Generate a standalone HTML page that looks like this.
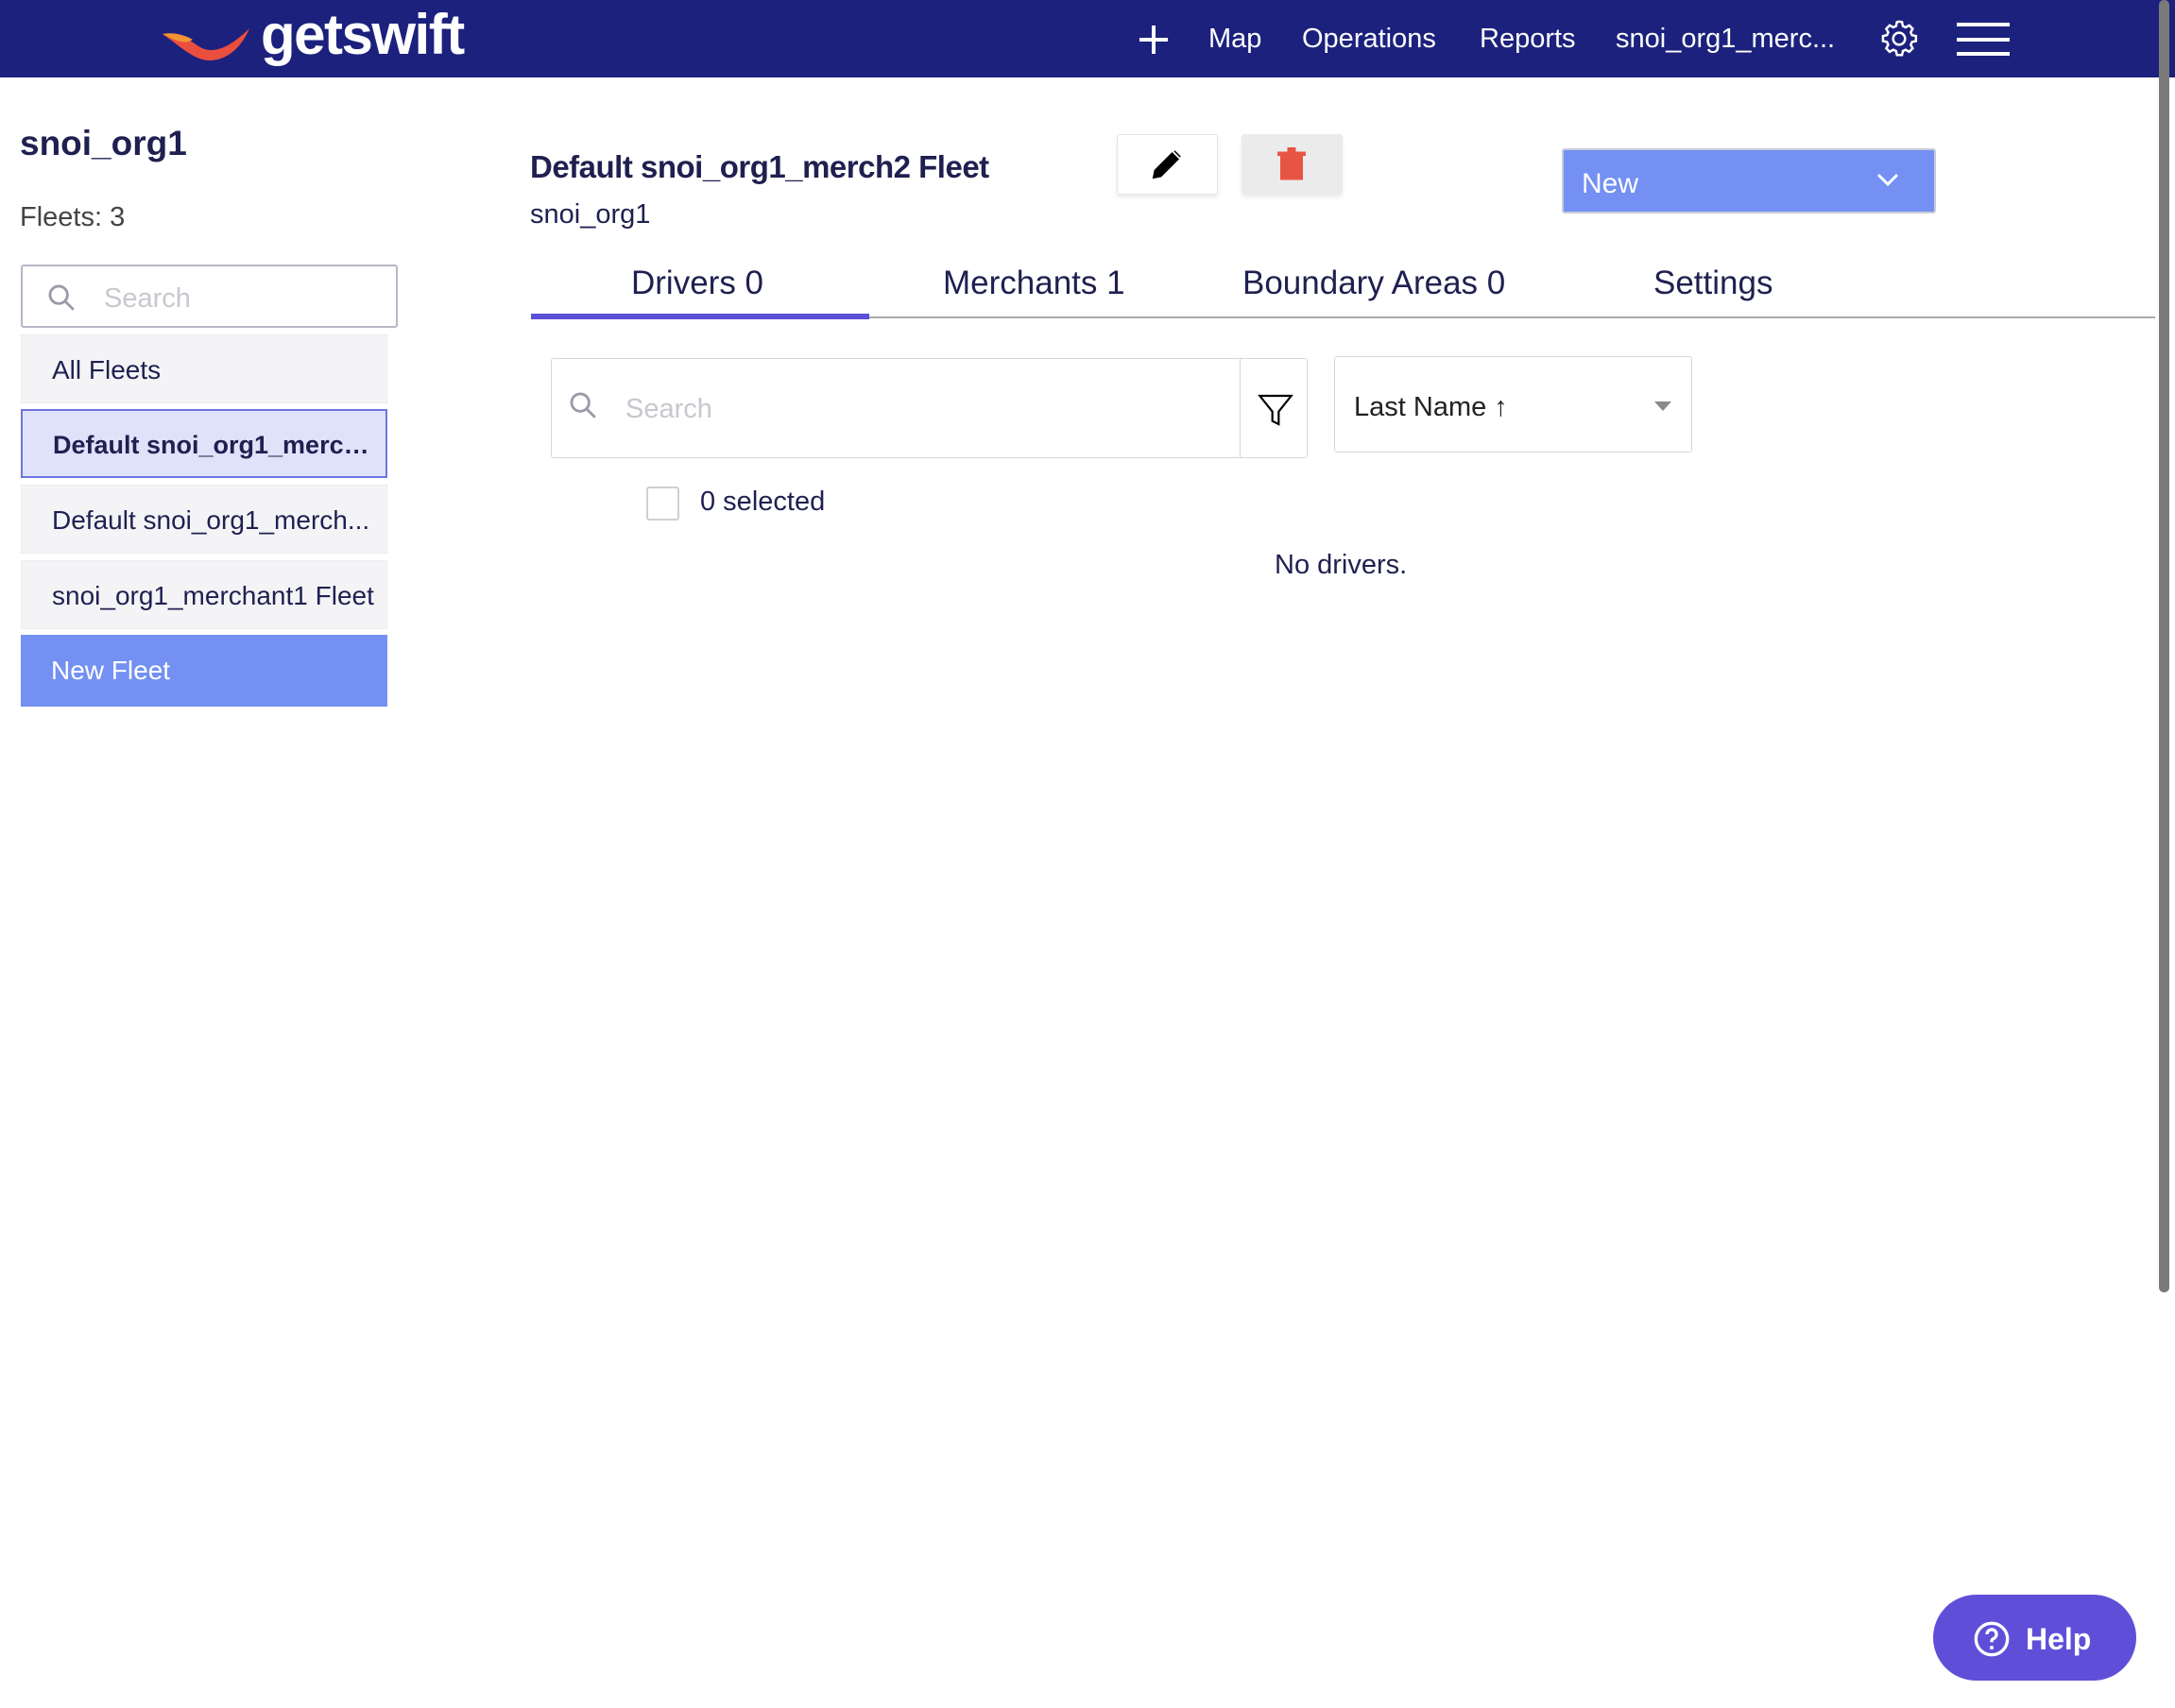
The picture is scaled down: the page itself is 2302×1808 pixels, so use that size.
<!DOCTYPE html>
<html><head><meta charset="utf-8"><style>
*{box-sizing:border-box;margin:0;padding:0}
body{width:2302px;height:1808px;position:relative;background:#fff;font-family:"Liberation Sans",sans-serif;color:#1f2050;overflow:hidden}
.a{position:absolute;white-space:nowrap}
.hdr{left:0;top:0;width:2302px;height:82px;background:#1c217d}
.nav{color:#fff;font-size:29px;top:25px}
.item{left:22px;width:388px;height:73px;background:#f4f4f7;border:1px solid #ececf0;font-size:28px;line-height:73px;padding-left:32px;overflow:hidden;text-overflow:ellipsis;padding-right:6px}
.tab{top:280px;font-size:35px;color:#1f2050}
</style></head><body>
<div class="a hdr"></div>
<svg class="a" style="left:170px;top:20px" width="100" height="45" viewBox="0 0 100 45"><path d="M2 16 C18 14 30 22 42 30 C56 38 74 30 94 10 C86 30 70 44 52 44 C36 44 22 30 2 16Z" fill="#ea4f3d"/><path d="M2 16 C12 14 24 16 34 22 C28 26 20 26 2 16Z" fill="#f39433"/></svg>
<div class="a" style="left:276px;top:2px;font-size:60px;font-weight:bold;color:#fff;letter-spacing:-1.5px">getswift</div>
<svg class="a" style="left:1204px;top:25px" width="34" height="34" viewBox="0 0 34 34"><path d="M17 2V32M2 17H32" stroke="#fff" stroke-width="4"/></svg>
<div class="a nav" style="left:1279px">Map</div>
<div class="a nav" style="left:1378px">Operations</div>
<div class="a nav" style="left:1566px">Reports</div>
<div class="a nav" style="left:1710px">snoi_org1_merc...</div>
<svg class="a" style="left:1987px;top:18px" width="46" height="46" viewBox="0 0 24 24"><path fill="none" stroke="#fff" stroke-width="1.3" d="M12 2.5l1.6.3.5 2.2 1.5.7 2-1.1 1.9 1.9-1.1 2 .7 1.5 2.2.5v2.8l-2.2.5-.7 1.5 1.1 2-1.9 1.9-2-1.1-1.5.7-.5 2.2h-2.8l-.5-2.2-1.5-.7-2 1.1-1.9-1.9 1.1-2-.7-1.5-2.2-.5v-2.8l2.2-.5.7-1.5-1.1-2 1.9-1.9 2 1.1 1.5-.7.5-2.2z"/><circle cx="12" cy="12" r="3.3" fill="none" stroke="#fff" stroke-width="1.3"/></svg>
<div class="a" style="left:2071px;top:24px;width:56px;height:4px;background:#fff"></div>
<div class="a" style="left:2071px;top:40px;width:56px;height:4px;background:#fff"></div>
<div class="a" style="left:2071px;top:55px;width:56px;height:4px;background:#fff"></div>
<div class="a" style="left:2285px;top:0;width:11px;height:1368px;background:#7a7a7a;border-radius:5px"></div>

<div class="a" style="left:21px;top:131px;font-size:37px;font-weight:bold">snoi_org1</div>
<div class="a" style="left:21px;top:214px;font-size:29px;color:#444">Fleets: 3</div>
<div class="a" style="left:22px;top:280px;width:399px;height:67px;border:2px solid #b8b6c8;border-radius:3px"></div>
<svg class="a" style="left:48px;top:298px" width="34" height="34" viewBox="0 0 24 24"><circle cx="10" cy="10" r="6.5" fill="none" stroke="#9a9aa8" stroke-width="2"/><path d="M15 15l6 6" stroke="#9a9aa8" stroke-width="2"/></svg>
<div class="a" style="left:110px;top:300px;font-size:29px;color:#c8c8cf">Search</div>
<div class="a item" style="top:354px">All Fleets</div>
<div class="a item" style="top:433px;background:#dfe2f8;border:2px solid #6e74e0;font-weight:bold;font-size:27px">Default snoi_org1_merch...</div>
<div class="a item" style="top:513px">Default snoi_org1_merch...</div>
<div class="a item" style="top:593px">snoi_org1_merchant1 Fleet</div>
<div class="a item" style="top:672px;height:76px;background:#7390f2;border:none;color:#fff;line-height:76px">New Fleet</div>

<div class="a" style="left:561px;top:158px;font-size:33px;font-weight:bold;letter-spacing:-0.5px">Default snoi_org1_merch2 Fleet</div>
<div class="a" style="left:561px;top:211px;font-size:29px">snoi_org1</div>
<div class="a" style="left:1182px;top:142px;width:107px;height:64px;border:1px solid #e4e4e4;border-radius:3px;box-shadow:0 3px 4px rgba(0,0,0,.08)"></div>
<svg class="a" style="left:1216px;top:154px" width="38" height="40" viewBox="0 0 24 24"><path d="M3 21l1-5L15.5 4.5l4 4L8 20z M17 3l4 4" fill="#000" stroke="#000" stroke-width="1"/></svg>
<div class="a" style="left:1314px;top:142px;width:107px;height:64px;background:#ebebeb;border-radius:3px;box-shadow:0 3px 4px rgba(0,0,0,.08)"></div>
<svg class="a" style="left:1352px;top:156px" width="30" height="36" viewBox="0 0 20 24"><rect x="2" y="6" width="16" height="17" fill="#e85444"/><rect x="0" y="3" width="20" height="3" fill="#e85444"/><rect x="7" y="0" width="6" height="4" fill="#e85444"/></svg>
<div class="a" style="left:1653px;top:157px;width:396px;height:69px;background:#7390f2;border:2px solid #c8ccd8;border-radius:3px"></div>
<div class="a" style="left:1674px;top:178px;font-size:30px;color:#fff">New</div>
<svg class="a" style="left:1985px;top:180px" width="26" height="20" viewBox="0 0 26 20"><path d="M3 5l10 10L23 5" fill="none" stroke="#fff" stroke-width="3"/></svg>

<div class="a tab" style="left:668px">Drivers 0</div>
<div class="a tab" style="left:998px">Merchants 1</div>
<div class="a tab" style="left:1315px">Boundary Areas 0</div>
<div class="a tab" style="left:1750px">Settings</div>
<div class="a" style="left:562px;top:335px;width:1719px;height:2px;background:#aaa"></div>
<div class="a" style="left:562px;top:332px;width:358px;height:6px;background:#5b4fd6"></div>

<div class="a" style="left:583px;top:379px;width:801px;height:106px;border:1px solid #d6d6d6;border-radius:3px"></div>
<div class="a" style="left:1312px;top:380px;width:1px;height:104px;background:#d6d6d6"></div>
<svg class="a" style="left:600px;top:412px" width="34" height="34" viewBox="0 0 24 24"><circle cx="10" cy="10" r="6.5" fill="none" stroke="#9a9aa8" stroke-width="2"/><path d="M15 15l6 6" stroke="#9a9aa8" stroke-width="2"/></svg>
<div class="a" style="left:662px;top:417px;font-size:29px;color:#c8c8cf">Search</div>
<svg class="a" style="left:1330px;top:414px" width="40" height="40" viewBox="0 0 24 24"><path d="M2 3h20l-8 10v8l-4-2v-6z" fill="none" stroke="#000" stroke-width="1.3"/></svg>
<div class="a" style="left:1412px;top:377px;width:379px;height:102px;border:1px solid #d6d6d6;border-radius:3px"></div>
<div class="a" style="left:1433px;top:415px;font-size:29px;color:#222">Last Name ↑</div>
<div class="a" style="left:1751px;top:425px;width:0;height:0;border-left:9px solid transparent;border-right:9px solid transparent;border-top:10px solid #8a8a8a"></div>
<div class="a" style="left:684px;top:515px;width:35px;height:36px;border:2px solid #d0d0d0;border-radius:3px"></div>
<div class="a" style="left:741px;top:515px;font-size:29px">0 selected</div>
<div class="a" style="left:1349px;top:582px;font-size:29px">No drivers.</div>

<div class="a" style="left:2046px;top:1688px;width:215px;height:91px;background:#5f4fd8;border-radius:46px"></div>
<svg class="a" style="left:2088px;top:1715px" width="40" height="40" viewBox="0 0 24 24"><circle cx="12" cy="12" r="10" fill="none" stroke="#fff" stroke-width="2"/><path d="M9 9a3 3 0 1 1 4 2.8c-1 .4-1 1.2-1 2.2" fill="none" stroke="#fff" stroke-width="2"/><circle cx="12" cy="17.5" r="1.2" fill="#fff"/></svg>
<div class="a" style="left:2144px;top:1717px;font-size:32px;font-weight:bold;color:#fff">Help</div>
</body></html>
